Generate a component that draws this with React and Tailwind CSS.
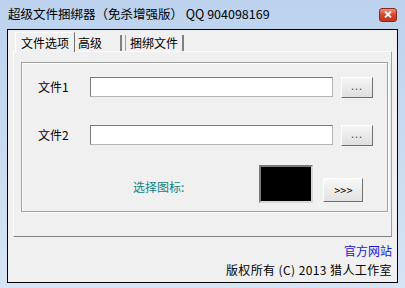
import React from "react";

const font = { fontFamily: '"Noto Sans CJK SC", "Liberation Sans", sans-serif' };

const DotsButton = () => (
  <button className="ml-[8px] flex h-[21px] w-[32px] items-center justify-center border border-t-white border-l-white border-r-[#707070] border-b-[#707070] bg-gradient-to-b from-[#f6f6f6] to-[#dedede] pb-[4px] text-[11px] leading-none tracking-[1px] text-[#555]">
    ...
  </button>
);

const FileRow = ({ label, className }) => (
  <div className={`flex h-[20px] items-center pl-[16px] ${className}`}>
    <span className="w-[52px] text-[12px] leading-none text-black">{label}</span>
    <div className="h-[20px] w-[243px] border border-[#7a7a7a] border-b-[#b5b5b5] border-r-[#b5b5b5] bg-white" />
    <DotsButton />
  </div>
);

export default function App() {
  return (
    <div
      className="flex h-[288px] w-[405px] flex-col overflow-hidden bg-gradient-to-b from-[#bcd2ee] via-[#c9dbf1] to-[#d6e4f5]"
      style={font}
    >
      {/* Title bar */}
      <div className="flex h-[29px] items-center pl-[8px] pr-[8px]">
        <span className="text-[12.5px] leading-none text-black">
          超级文件捆绑器（免杀增强版） QQ 904098169
        </span>
        <div className="ml-auto flex h-[14px] w-[18px] items-center justify-center rounded-[3px] border border-[#8b2a1a] bg-gradient-to-b from-[#e8907c] via-[#d2452a] to-[#c0361f]">
          <svg width="8" height="7" viewBox="0 0 8 7">
            <path d="M1 0.5 L7 6.5 M7 0.5 L1 6.5" stroke="white" strokeWidth="1.8" />
          </svg>
        </div>
      </div>

      {/* Client area */}
      <div className="mx-[7px] flex h-[254px] flex-col border border-black bg-[#f0f0f0]">
        <div className="px-[5px] pt-[2px]">
          {/* Tabs */}
          <div className="flex h-[19px] items-end pl-[2px]">
            <div className="relative z-10 -mb-[1px] flex h-[20px] w-[60px] items-center justify-center border border-b-0 border-l-white border-t-white border-r-[#707070] bg-[#f0f0f0] text-[12px] leading-none">
              文件选项
            </div>
            <div className="flex h-[16px] w-[47px] items-center border-r-2 border-r-[#808080] pl-[3px] text-[12px] leading-none">
              高级
            </div>
            <div className="ml-[3px] flex h-[16px] w-[59px] items-center justify-center border-l border-l-[#a0a0a0] border-r-2 border-r-[#808080] text-[12px] leading-none">
              捆绑文件
            </div>
          </div>

          {/* Tab panel */}
          <div className="h-[186px] border border-b-[#808080] border-l-white border-r-[#a0a0a0] border-t-white pl-[7px] pt-[10px]">
            <div className="h-[150px] w-[367px] border border-[#a0a0a0] shadow-[inset_1px_1px_0_#fff,1px_1px_0_#fff]">
              <FileRow label="文件1" className="mt-[14px]" />
              <FileRow label="文件2" className="mt-[28px]" />
              <div className="mt-[20px] flex items-start">
                <span className="ml-[111px] mt-[16px] text-[12px] leading-none text-[#0e8383]">
                  选择图标:
                </span>
                <div className="ml-[75px] h-[38px] w-[54px] border-2 border-[#7a7a7a] border-b-[#d8d8d8] border-r-[#d8d8d8] bg-black" />
                <button className="ml-[10px] mt-[13px] flex h-[24px] w-[40px] items-center justify-center border border-l-white border-t-white border-b-[#707070] border-r-[#707070] bg-gradient-to-b from-[#f8f8f8] to-[#e2e2e2] text-[11px] leading-none text-black">
                  &gt;&gt;&gt;
                </button>
              </div>
            </div>
          </div>
        </div>

        {/* Footer */}
        <div className="flex flex-col items-end pr-[5px]">
          <span className="mt-[8px] text-[12px] leading-none text-[#1414d6]">官方网站</span>
          <span className="mt-[7px] text-[12px] leading-none tracking-[0.4px] text-black">
            版权所有 (C) 2013 猎人工作室
          </span>
        </div>
      </div>
    </div>
  );
}
